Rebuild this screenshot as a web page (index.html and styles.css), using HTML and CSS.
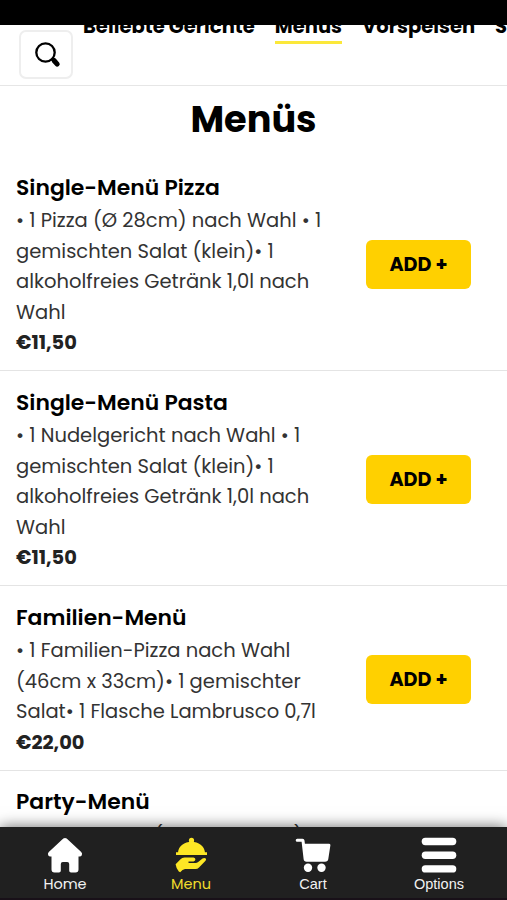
FILE: index.html
```
<!DOCTYPE html>
<html lang="de">
<head>
<meta charset="utf-8">
<title>Menüs</title>
<link rel="stylesheet" href="styles.css">
</head>
<body>
<div class="status"></div>
<header class="header">
  <button class="search" aria-label="Suche"><svg viewBox="0 0 26 26" width="26" height="26"><circle cx="10.5" cy="10.5" r="9.2" fill="none" stroke="#000" stroke-width="2.3"/><path d="M16.5 16.5l2 2" stroke="#000" stroke-width="3"/><path d="M19 18.5l3.2 3.7" stroke="#000" stroke-width="5" stroke-linecap="round"/></svg></button>
  <nav class="tabs">
    <a class="tab">Beliebte Gerichte</a>
    <a class="tab on">Menüs</a>
    <a class="tab">Vorspeisen</a>
    <a class="tab">Salate</a>
  </nav>
</header>
<main class="menu">
  <h1>Menüs</h1>
  <section class="item">
    <div class="text">
      <h2>Single-Menü Pizza</h2>
      <p>• 1 Pizza (Ø 28cm) nach Wahl • 1<br>gemischten Salat (klein)• 1<br>alkoholfreies Getränk 1,0l nach<br>Wahl</p>
      <strong>€11,50</strong>
    </div>
    <button class="add">ADD +</button>
  </section>
  <section class="item">
    <div class="text">
      <h2>Single-Menü Pasta</h2>
      <p>• 1 Nudelgericht nach Wahl • 1<br>gemischten Salat (klein)• 1<br>alkoholfreies Getränk 1,0l nach<br>Wahl</p>
      <strong>€11,50</strong>
    </div>
    <button class="add">ADD +</button>
  </section>
  <section class="item">
    <div class="text">
      <h2>Familien-Menü</h2>
      <p>• 1 Familien-Pizza nach Wahl<br>(46cm x 33cm)• 1 gemischter<br>Salat• 1 Flasche Lambrusco 0,7l</p>
      <strong>€22,00</strong>
    </div>
    <button class="add">ADD +</button>
  </section>
  <section class="item">
    <div class="text">
      <h2>Party-Menü</h2>
      <p class="peek"><span>(</span><span>)</span></p>
    </div>
  </section>
</main>
<footer class="bar">
  <a class="link home"><svg viewBox="0 0 36 36" width="36" height="36"><path d="M16.3 1.6q1.7-1.3 3.4 0L34.2 15q1.4 1.6.6 3.2-.6 1.300-2.200 1.300H31.500V32.500q0 3-3 3H24q-1.800 0-1.800-1.800V27q0-2-2-2h-4.400q-2 0-2 2v6.700q0 1.800-1.800 1.800H7.500q-3 0-3-3V19.500H3.400q-1.600 0-2.200-1.300-.8-1.600.6-3.200z" fill="#fff"/></svg><span>Home</span></a>
  <a class="link dish"><svg viewBox="0 0 36 36" width="36" height="36"><g fill="#fde725"><circle cx="18.500" cy="3.400" r="2.600"/><path d="M5 15.500C5.500 9 11.500 4.800 18.500 4.800S31.500 9 32 15.500zM3 15.300h31v2.700h-31z"/><path d="M2.600 27.200L7.500 22.200Q9 20.600 11.500 20.600H20.500Q22.600 20.800 22.400 22.800 22.200 24.200 20.500 24.400H15.500V26H22.500Q24 26 25.200 25L29.500 21.500Q31.500 20.300 32.800 21.600 33.700 22.700 32.300 24L26 30.500Q24.500 32 22.500 32H12Q9.500 32.200 7.200 35.200L5.800 34.500Q3.300 32 2.600 27.200z"/></g></svg><span>Menu</span></a>
  <a class="link cart"><svg viewBox="0 0 36 36" width="36" height="36"><g fill="#fff"><path d="M2.200 1.800H7.500Q9.300 1.800 9.500 3.600L9.900 6.700H34.200Q35.600 6.700 35.400 8.200L33.300 22Q32.900 24.800 30 24.800H11.500Q8.900 24.800 8.600 22L6.600 4.800H2.200Q.7 4.800.7 3.300T2.200 1.800z"/><circle cx="13" cy="30.700" r="4.200"/><circle cx="26.500" cy="30.700" r="4.200"/></g></svg><span>Cart</span></a>
  <a class="link options"><svg viewBox="0 0 36 36" width="36" height="36"><g fill="#fff"><rect x=".7" y="0.800" width="34.600" height="7.400" rx="3.700"/><rect x=".7" y="14.500" width="34.600" height="7.400" rx="3.700"/><rect x=".7" y="28.200" width="34.600" height="7.400" rx="3.700"/></g></svg><span>Options</span></a>
</footer>
</body>
</html>
```
FILE: styles.css
```
* { box-sizing: border-box; }
html, body { height: 100%; }
body {
  margin: 0;
  display: flex;
  flex-direction: column;
  overflow: hidden;
  background: #fff;
  color: #000;
  font-family: Poppins, Inter, sans-serif;
}
.status { flex: none; height: 25px; background: #000; }
.header {
  flex: none;
  display: flex;
  align-items: flex-start;
  height: 61px;
  border-bottom: 1px solid #e6e6e6;
  overflow: hidden;
}
.search {
  flex: none;
  display: flex;
  width: 54px;
  height: 49px;
  margin: 5px 0 0 19px;
  padding: 10px 0 0 14px;
  border: 2px solid #eee;
  border-radius: 7px;
  background: #fff;
}
.search svg { display: block; }
.tabs { display: flex; gap: 20px; margin: -14px 0 0 10px; }
.tab {
  height: 33px;
  border-bottom: 3px solid transparent;
  font-size: 19.55px;
  line-height: 31px;
  font-weight: 700;
  white-space: nowrap;
}
.tab.on { border-color: #fbe83a; }

.menu { flex: 1; min-height: 0; overflow: hidden; }
h1 {
  margin: 0;
  height: 70px;
  padding-top: 9px;
  font-size: 36.7px;
  line-height: 48px;
  font-weight: 700;
  text-align: center;
}
.item {
  display: flex;
  align-items: center;
  justify-content: space-between;
  padding: 14.5px 36px 11.5px 16px;
  border-bottom: 1px solid #e4e4e4;
}
h2 { margin: 0; font-size: 21.9px; line-height: 34.5px; padding-bottom: 1px; font-weight: 600; white-space: nowrap; }
p { margin: 0; font-size: 19.5px; line-height: 30.5px; color: #333; white-space: nowrap; }
.peek { display: flex; gap: 131px; padding-left: 138px; line-height: 30px; }
strong {
  display: block;
  font-size: 19.4px;
  line-height: 30.5px;
  font-weight: 700;
  color: #222;
}
.add {
  width: 105px;
  height: 49px;
  padding: 0;
  border: 0;
  border-radius: 6px;
  background: #ffd000;
  color: #000;
  font: 700 19.2px/49px Poppins, Inter, sans-serif;
}
.bar {
  position: relative;
  flex: none;
  display: flex;
  height: 73px;
  padding-left: 2px;
  background: #202020;
  border-bottom: 2px solid #181018;
  box-shadow: 0 0 14px rgba(0, 0, 0, 0.6);
  color: #f2f2f2;
}
.link {
  display: flex;
  flex-direction: column;
  align-items: center;
  width: 126px;
  padding-top: 10px;
  font-size: 14.5px;
  line-height: 20px;
}
.link svg { display: block; margin-bottom: 1px; }
.dish { color: #f0dc2c; }
.cart { width: 118px; }
.options { width: 134px; }
.cart, .options { font-family: "Liberation Sans", sans-serif; font-size: 14.5px; }
```
